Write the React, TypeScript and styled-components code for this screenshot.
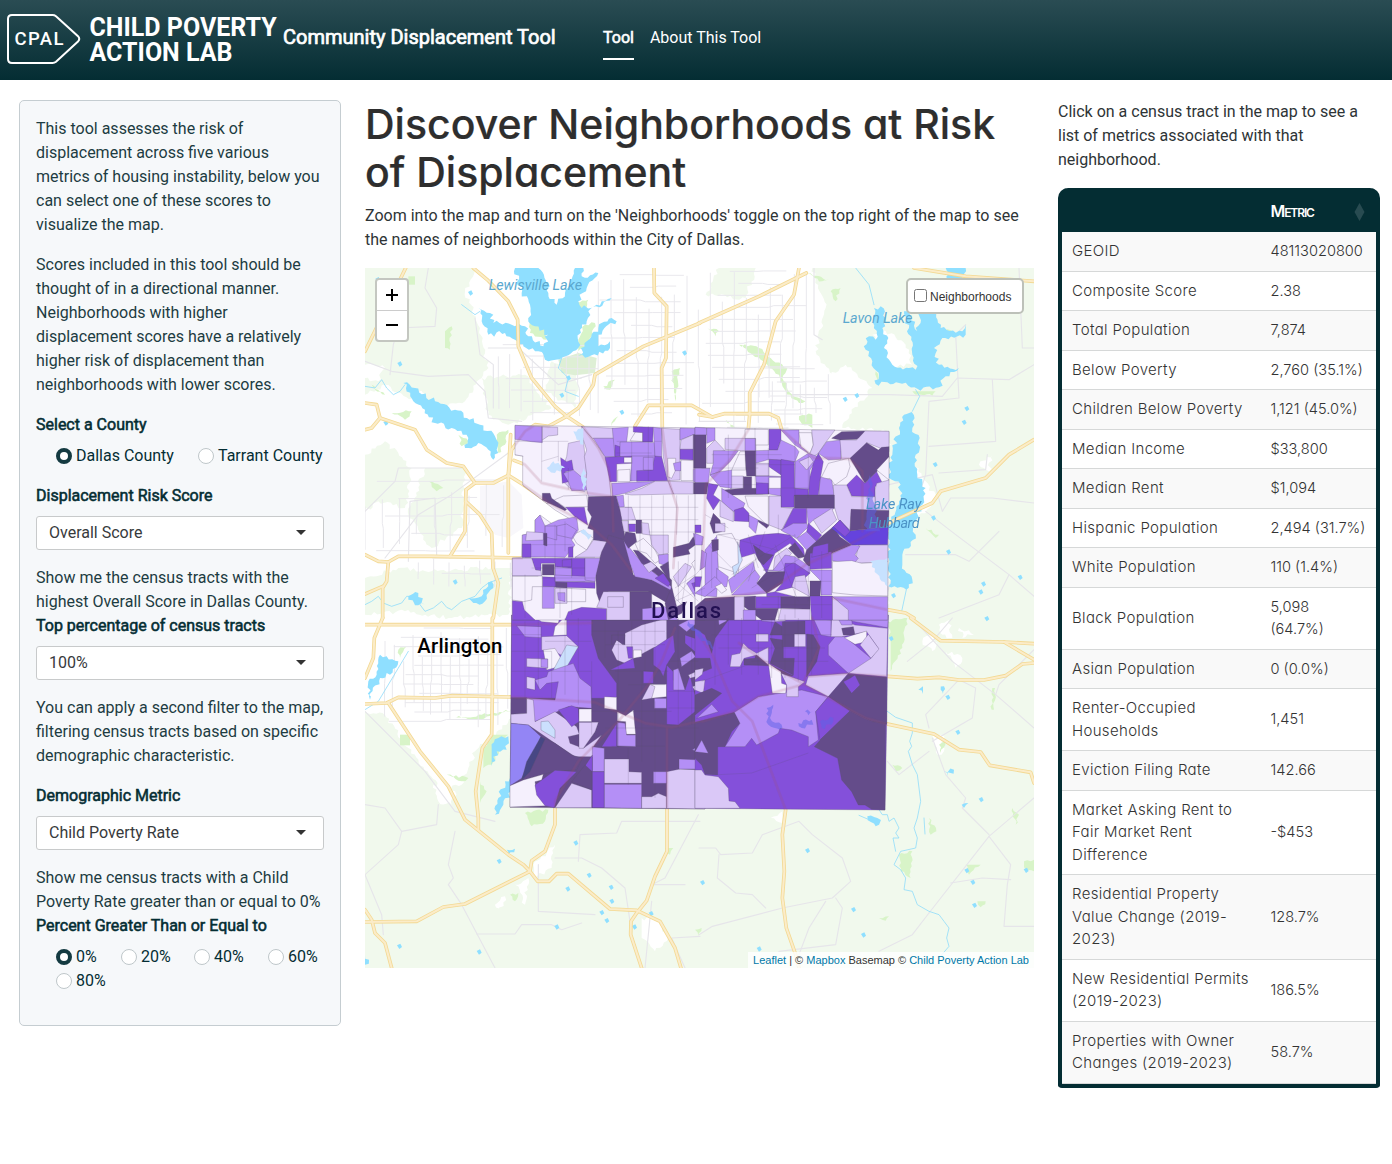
import React from "react";
import styled, { createGlobalStyle, css } from "styled-components";

const GlobalStyle = createGlobalStyle`
  *, *::before, *::after { box-sizing: border-box; }
  body { margin: 0; background: #fff; color: #042d33; font: 400 16px/24px Roboto, "Liberation Sans", sans-serif; }
  p, h1 { margin: 0; }
`;

const geometric = css`
  font-family: Inter, Lato, sans-serif;
  font-feature-settings: "cv11";
`;

/* ---------- header ---------- */
const Header = styled.header`
  height: 80px;
  padding: 0 6px;
  display: flex;
  align-items: center;
  background: linear-gradient(#2a4c53, #042d33);
  color: #fff;
`;
const Brand = styled.div`
  width: 277px;
  height: 80px;
  display: flex;
  align-items: center;
  svg { display: block; flex: none; }
`;
const Wordmark = styled.div`
  font-size: 25px;
  line-height: 25px;
  font-weight: 700;
  white-space: nowrap;
`;
const AppName = styled.div`
  width: 272px;
  padding-bottom: 6px;
  font-size: 20px;
  line-height: 30px;
  white-space: nowrap;
  -webkit-text-stroke: 0.7px #fff;
`;
const Nav = styled.nav`
  display: flex;
  gap: 16px;
  margin: 0 0 6px 48px;
`;
const NavLink = styled.a<{ $active?: boolean }>`
  height: 46px;
  line-height: 48px;
  border-bottom: 2px solid ${(p) => (p.$active ? "#fff" : "transparent")};
  -webkit-text-stroke: ${(p) => (p.$active ? "0.6px #fff" : "0")};
`;

/* ---------- page ---------- */
const Page = styled.main`
  display: grid;
  grid-template-columns: 322px 669px 322px;
  column-gap: 24px;
  align-items: start;
  padding: 20px 0 0 19px;
`;
const Sidebar = styled.aside`
  height: 926px;
  padding: 16px;
  border: 1px solid #c5cdd1;
  border-radius: 5px;
  background: #f6f8fa;
  white-space: nowrap;
`;
const Para = styled.p<{ $mb?: number; $color?: string }>`
  margin-bottom: ${(p) => p.$mb ?? 16}px;
  color: ${(p) => p.$color ?? "#1d3c42"};
`;
const Label = styled.div<{ $mb?: number }>`
  margin-bottom: ${(p) => p.$mb ?? 8}px;
  -webkit-text-stroke: 0.55px #042d33;
`;
const Radios = styled.div<{ $cols: string }>`
  display: grid;
  grid-template-columns: ${(p) => p.$cols};
  padding-left: 20px;
  margin-bottom: 16px;
`;
const Option = styled.label`
  display: flex;
  align-items: center;
  gap: 4px;
`;
const Dot = styled.span<{ $on?: boolean }>`
  width: 16px;
  height: 16px;
  flex: none;
  margin-top: -1px;
  border-radius: 50%;
  background: #fff;
  border: ${(p) => (p.$on ? "4.5px solid #143a41" : "1px solid #bfc7ca")};
`;
const Select = styled.div`
  height: 34px;
  padding: 0 17px 0 12px;
  margin-bottom: 16px;
  display: flex;
  align-items: center;
  justify-content: space-between;
  border: 1px solid #c8cacb;
  border-radius: 3px;
  background: #fff;
  color: #373a3c;
  &::after {
    content: "";
    border: 5px solid transparent;
    border-top-color: #333;
    border-bottom: 0;
    margin-top: -2px;
  }
`;
const Title = styled.h1`
  ${geometric}
  height: 96px;
  margin-bottom: 8px;
  font-size: 41px;
  line-height: 48px;
  font-weight: 500;
  white-space: nowrap;
  color: #2e2e2e;
  -webkit-text-stroke: 0.2px #2e2e2e;
`;

/* ---------- map chrome ---------- */
const MapFrame = styled.div`
  position: relative;
  width: 669px;
  height: 700px;
  overflow: hidden;
  background: #fff;
  font-family: "Liberation Sans", Arial, sans-serif;
  svg { display: block; }
`;
const ZoomBox = styled.div`
  position: absolute;
  left: 10px;
  top: 10px;
  width: 34px;
  height: 64px;
  border: 2px solid #c4c7c1;
  border-radius: 4px;
  background: #fff;
`;
const ZoomButton = styled.div`
  height: 30px;
  display: grid;
  place-items: center;
  & + & { border-top: 1px solid #ccc; padding-bottom: 2px; }
`;
const LayerBox = styled.div`
  position: absolute;
  right: 10px;
  top: 10px;
  width: 118px;
  height: 36px;
  padding: 1px 0 0 6px;
  display: flex;
  align-items: center;
  gap: 3px;
  border: 2px solid #bdc1b9;
  border-radius: 5px;
  background: #fff;
  color: #333;
  font-size: 12px;
  white-space: nowrap;
`;
const Check = styled.span`
  width: 13px;
  height: 13px;
  margin-top: -3px;
  border: 1px solid #767676;
  border-radius: 2.5px;
`;
const Credits = styled.div`
  position: absolute;
  right: 0;
  bottom: 0;
  height: 16px;
  padding: 0 5px;
  background: rgba(255, 255, 255, 0.8);
  color: #333;
  font-size: 11px;
  line-height: 16px;
  white-space: nowrap;
  a { color: #0078a8; }
`;

/* ---------- metric table ---------- */
const Table = styled.div`
  ${geometric}
  margin-top: 16px;
  border: 4px solid #042d33;
  border-top: 0;
  border-radius: 10px 10px 4px 4px;
  overflow: hidden;
  background: #042d33;
  font-size: 15px;
  line-height: 22.5px;
  font-weight: 300;
  color: #333;
`;
const HeadRow = styled.div`
  height: 44px;
  padding: 4px 11px 0 208.5px;
  display: flex;
  align-items: center;
  justify-content: space-between;
  color: #fff;
  font-weight: 600;
  font-size: 16px;
  letter-spacing: -1.1px;
  small { font-size: 12px; }
`;
const Row = styled.div<{ $odd: boolean }>`
  display: grid;
  grid-template-columns: 188.5px 100px;
  column-gap: 10px;
  align-items: center;
  padding: 8px 10px;
  border-bottom: 1px solid #d6d8d8;
  background: ${(p) => (p.$odd ? "#f9f9f9" : "#fff")};
  white-space: pre;
`;
const MetricName = styled.span`
  letter-spacing: 0.34px;
`;
const MetricValue = styled.span`
  font-size: 14.6px;
`;

/* ---------- cartography: units are thirds of a pixel ---------- */
type Shape = [string, string];

const rough = (pts: string, amp: number, seed = 7) => {
  let s = seed;
  const rnd = () => {
    s = (s * 16807 + 11) % 2147483647;
    return (s % 1000) / 500 - 1;
  };
  const p = pts.split(" ").map((q) => q.split(",").map(Number));
  const out: string[] = [];
  p.forEach(([x, y], i) => {
    const [a, b] = p[(i + 1) % p.length];
    const len = Math.hypot(a - x, b - y) || 1;
    const n = Math.max(1, Math.round(len / 9));
    const straight = x === a || y === b;
    for (let k = 0; k < n; k++) {
      const d = k && !straight ? rnd() * amp : 0;
      out.push(
        `${(x + ((a - x) * k) / n + (d * (b - y)) / len).toFixed(1)},${(y + ((b - y) * k) / n - (d * (a - x)) / len).toFixed(1)}`
      );
    }
  });
  return out.join(" ");
};

const TL = "translate(0 0)";
const TR = "translate(1002 0)";
const BL = "translate(0 1050)";
const BR = "translate(1002 1050)";

const greenLand: Shape[] = [
  [TL, "0,0 330,0 300,70 345,180 340,260 300,330 200,330 150,400 60,350 0,380"],
  [TL, "200,60 290,90 330,150 370,300 300,400 200,420 150,330"],
  [TL, "0,560 60,520 140,600 120,720 40,700 0,730"],
  [TL, "180,600 300,600 290,780 200,840 130,740"],
  [TL, "100,900 200,910 380,900 440,900 430,1040 260,1050 120,1030 0,1040 0,930"],
  [TL, "560,280 640,300 630,420 540,370"],
  [TL, "350,330 480,320 560,420 430,470 370,440"],
  [TR, "340,0 1005,0 1005,1050 565,1050 570,485 430,480 470,400 400,330 350,250 380,120"],
  [TR, "60,0 170,0 140,90 20,80"],
  [BL, "0,280 60,290 130,390 230,520 290,500 330,400 440,300 440,520 560,570 1005,570 1005,1050 0,1050"],
  [BR, "0,570 560,570 560,0 1005,0 1005,1050 0,1050"],
];
const whiteTowns: Shape[] = [
  [TL, "0,290 60,300 40,340 0,330"],
  [TR, "520,200 560,190 620,230 640,290 570,300"],
  [TR, "640,580 680,640 710,690 690,720 650,760 640,700"],
  [TR, "840,590 880,560 870,610"],
  [TR, "360,340 440,290 520,360 450,440 380,470"],
  [BL, "205,500 270,520 260,560 220,550"],
  [BL, "830,900 880,905 910,960 870,1000 830,960"],
  [BL, "505,740 570,680 560,750 510,780"],
  [BL, "390,860 420,835 405,880"],
  [BL, "450,800 490,780 480,860"],
  [BR, "670,70 690,50 715,75 700,100"],
  [BR, "720,20 750,5 760,60 730,50"],
  [BR, "780,30 825,50 790,60"],
  [BR, "740,100 790,120 770,150"],
  [BR, "700,355 730,350 735,400 715,410"],
  [BR, "215,600 250,580 250,615"],
];
const parks: Shape[] = [
  [TL, "490,150 550,175 545,215 495,195"],
  [TL, "640,215 660,170 690,165 670,230 640,250"],
  [TL, "610,110 670,95 660,125 620,125"],
  [TL, "395,500 430,485 420,530 400,555"],
  [TL, "240,190 260,175 255,245 240,240"],
  [TL, "80,435 140,430 120,455"],
  [TL, "715,355 750,335 735,365"],
  [TL, "920,310 945,300 930,400"],
  [TL, "280,500 310,520 290,535"],
  [TL, "20,350 60,380 30,365"],
  [TL, "190,640 235,660 215,670"],
  [TL, "745,455 760,445 740,475"],
  [TL, "130,25 150,25 150,50 130,50"],
  [TR, "120,230 180,240 215,270 265,300 250,330 280,380 320,400 300,405 260,370 240,320 205,290"],
  [TR, "300,445 340,440 340,480 310,470"],
  [TR, "325,15 390,35 370,40"],
  [TR, "25,180 60,190 50,205"],
  [TR, "395,70 425,60 410,100"],
  [TR, "625,580 650,555 640,585"],
  [TR, "640,370 710,370 700,383 650,380"],
  [TR, "730,180 760,190 750,205"],
  [TR, "530,310 545,340 535,345"],
  [TR, "80,455 110,480 95,478"],
  [TR, "680,780 720,800 710,810"],
  [BL, "355,400 385,350 430,350 380,440 355,450"],
  [BL, "105,350 135,350 135,382 105,382"],
  [BL, "245,470 310,480 290,490"],
  [BL, "345,490 365,520 345,555"],
  [BL, "480,585 550,575 540,610 500,625"],
  [BL, "265,300 350,290 440,275 350,305"],
  [BL, "900,690 925,690 915,710"],
  [BL, "100,95 125,85 105,120"],
  [BL, "435,830 460,825 450,850"],
  [BL, "990,935 1010,930 1000,955"],
  [BR, "565,10 625,0 610,90 575,160 575,70"],
  [BR, "600,710 640,700 635,780 605,760"],
  [BR, "720,380 738,370 725,405"],
  [BR, "540,900 570,895 560,908"],
  [BR, "835,850 860,850 845,868"],
  [BR, "975,730 1005,725 1005,760 980,755"],
  [BR, "580,440 610,450 590,460"],
  [BR, "940,570 960,590 950,620"],
  [BR, "690,600 712,640 695,650"],
  [BR, "800,740 845,740 810,770"],
  [BR, "880,210 888,210 885,275 878,275"],
];
const lakes: Shape[] = [
  [TL, "450,0 520,0 545,45 550,75 575,110 600,75 615,40 630,0 655,0 650,25 700,15 665,60 640,100 650,120 720,100 740,90 670,130 665,160 645,185 640,240 610,262 540,275 520,250 475,235 465,200 490,205 535,235 550,200 510,175 490,150 495,110 470,75"],
  [TL, "340,120 375,135 385,165 440,170 480,175 500,235 450,215 420,195 370,200 350,160"],
  [TL, "640,265 665,220 700,180 740,150 755,160 700,200 700,235 735,220 735,240 680,262"],
  [TL, "115,345 150,360 210,400 270,425 345,470 390,505 395,545 385,575 370,545 340,525 300,540 310,510 260,480 210,465 180,425 145,400"],
  [TL, "130,985 160,975 180,1010 150,1012"],
  [TL, "310,990 350,985 380,940 385,960 360,1000 325,1005"],
  [TR, "525,120 545,115 560,150 550,180 568,210 555,240 580,290 630,300 650,305 640,260 630,180 615,130 625,130 655,190 665,130 710,130 725,180 790,190 800,170 800,200 730,210 705,240 720,290 780,300 740,325 720,358 655,362 600,345 530,348 540,325 520,280 500,245 510,205 530,215"],
  [TR, "740,0 800,0 790,35 745,35"],
  [TR, "615,440 638,432 640,480 662,510 650,560 655,620 680,660 670,710 645,760 650,800 610,860 610,890 640,935 622,965 568,955 567,780 600,700 605,650 570,630 580,560 600,480"],
  [BL, "45,110 65,115 100,130 75,170 45,180 15,245 10,190 35,170"],
  [BL, "380,390 400,360 430,355 425,395 395,400 380,445"],
  [BL, "435,480 440,520 415,560 390,590 400,540 420,490"],
  [BL, "425,695 450,692 430,708"],
  [BL, "0,1010 12,1025 0,1040"],
  [BR, "505,595 535,600 548,628 530,625"],
  [BR, "658,215 672,205 672,228"],
  [BR, "735,460 765,455 745,475"],
  [BR, "725,215 735,205 732,228"],
  [BR, "788,560 808,555 795,570"],
];
const ponds = [
  "38,35 316,75 104,288 62,465 590,382 610,330 1440,394 1475,383 1805,422 1797,463 1710,590 1705,750 1750,852 1965,928 1855,948 1847,972 1585,983 958,255 770,433 270,942 1578,1112 1865,1052 1748,1288",
  "402,1780 632,1725 672,1822 738,1858 740,1900 710,1934 725,1958 608,1863 575,1977 858,1937 808,1977 103,2035 342,2052 1327,1748 1012,1844 1465,1925 1495,2001 1182,2043 1828,1912 1823,1843 1805,1808 1983,1807 1778,1393 1848,1595",
]
  .join(" ")
  .split(" ")
  .map((q) => q.split(",").map(Number));

const streams: Shape[] = [
  [TL, "0,355 30,360 50,335 65,360 85,380 105,370 120,350"],
  [TL, "0,1010 20,1000 40,985 55,1005 80,1015 110,1005 125,985 150,985 165,1010 180,1030 205,1020 230,1000 245,1018 260,1025 290,1000 330,985 350,960 370,945 410,930"],
  [TL, "290,110 330,140 345,130"],
  [TL, "590,270 580,300 610,330 600,370 640,385"],
  [TR, "470,0 510,50 525,110"],
  [TR, "650,365 662,385 640,430"],
  [TR, "622,965 608,1030"],
  [BR, "565,280 590,298 640,315 640,345 632,370 638,385 628,400 640,440 655,470 660,510 665,550 655,600 645,630 655,660 650,690 605,700 585,740 605,755 620,780 615,815 640,820 655,860 690,880 720,890 735,910 750,930 743,960 750,985 720,1020"],
  [BR, "540,575 550,590 565,590 570,610 585,600 600,630 590,645 600,660 582,660 590,700"],
  [BR, "675,600 678,648"],
  [BR, "480,592 510,605"],
  [BL, "0,275 40,250 130,100"],
];
const highways: Shape[] = [
  [TL, "325,0 370,38 430,100 458,155 460,235 500,330 570,415 605,445 655,478 700,540 730,600 742,685 745,790"],
  [TL, "1005,165 835,235 690,320 685,350 640,420 605,445 550,475 510,470 480,490 440,545 430,622"],
  [TL, "867,0 868,75 905,115 903,270 890,300 892,480 912,640 937,720 925,900"],
  [TL, "810,475 850,412 980,412 1042,447"],
  [TL, "0,405 35,410 45,450 150,485 185,545 245,585 295,595 330,645 385,645 430,622 475,650 560,710 670,770 740,830 800,910"],
  [TL, "0,485 20,480 45,450"],
  [TL, "330,645 303,665 302,700 345,740 380,795 384,900 400,945 385,1050"],
  [TL, "302,700 300,790 255,865"],
  [TL, "0,860 40,880 70,882 100,865 200,865 470,870"],
  [TL, "70,882 65,940 53,960 53,1050"],
  [TL, "0,978 53,955"],
  [TL, "437,500 430,622 430,855"],
  [TL, "447,577 480,590 530,645 665,675 740,685"],
  [TL, "122,0 0,250"],
  [TR, "300,0 285,80 230,160 195,290 152,375 152,440 148,485 90,580 20,650 10,900"],
  [TR, "322,15 180,85 0,165"],
  [TR, "0,440 40,447 75,437 210,437 238,450 248,485 345,570 450,572 490,610 490,790"],
  [TR, "645,0 800,25 1005,40"],
  [TR, "1005,515 930,560 860,630 725,670 700,705 590,755 460,825 320,890 210,970 20,995"],
  [TR, "400,990 565,1025 620,1035 645,1050"],
  [BL, "0,20 440,20 680,15"],
  [BL, "53,0 28,60 25,120 0,180"],
  [BL, "382,0 382,235 380,350 352,390 332,520 340,600 340,635"],
  [BL, "0,258 65,255 100,238 210,240 262,233 440,237 690,253 840,315 920,328 1010,308"],
  [BL, "70,255 165,400 250,505 300,605 430,710 475,740 495,760 518,790 552,790 575,767 610,767 735,873 815,877 885,910 930,990 948,1050"],
  [BL, "495,760 300,858 235,867 155,910 0,912"],
  [BL, "495,760 500,728 540,700 570,620 570,550 640,430 760,310 850,200 890,130 930,30"],
  [BL, "906,330 906,700 870,775 845,848 815,885 798,910 797,950 830,1050"],
  [BL, "0,875 20,905 30,945 60,975 80,1050"],
  [BR, "0,50 40,110 100,250 160,310 260,575 250,650 256,760 250,840 262,930 290,1010 300,1050"],
  [BR, "635,0 725,68 915,72 1005,125"],
  [BR, "915,72 1005,77"],
  [BR, "330,175 440,167 565,175 655,182 720,178 780,186 855,186 920,173 970,138 1005,135"],
  [BR, "120,75 210,140 380,235 500,300 560,317 705,348 780,395 845,402 872,442 995,463 1005,495"],
  [BR, "10,310 105,280 180,235 310,200 360,90 340,0"],
];
const lanes: Shape[] = [
  [TL, "75,320 85,230 100,180 210,175 215,120 180,60 190,0"],
  [TL, "0,280 80,310 190,325 310,320 360,370 370,450 470,460"],
  [TL, "330,150 345,260 385,290 385,420"],
  [TL, "370,240 460,240 580,350 680,320"],
  [TL, "450,540 260,680 160,740 60,870"],
  [TL, "0,730 90,640 100,600 290,600"],
  [TL, "130,880 135,700 210,690 215,860"],
  [TR, "540,1050 680,620 690,400 780,390 770,200 800,170"],
  [TR, "280,380 570,380 730,385 775,330 930,335 1005,290"],
  [TR, "570,650 700,620 730,730 755,690 880,690 1005,705"],
  [TR, "960,0 970,240 1005,240"],
  [TR, "880,335 890,520 690,535"],
  [TR, "720,615 860,605 865,560"],
  [TR, "680,730 770,800 930,920 1005,985"],
  [TR, "620,860 770,860 810,880 900,790"],
  [TR, "930,920 900,980 720,1050"],
  [TR, "0,460 140,460"],
  [TR, "345,0 345,200 370,215"],
  [BL, "0,560 60,570 110,640 215,620 220,560"],
  [BL, "110,640 100,680 0,770"],
  [BL, "0,770 50,890 55,950"],
  [BL, "270,640 250,740 265,780 250,800 290,860 390,1050"],
  [BL, "335,948 450,948 470,920 560,920 590,935 650,915"],
  [BL, "0,280 180,460 270,580 390,610"],
  [BL, "640,730 645,650 755,645 770,610 1005,610"],
  [BL, "570,720 650,720 710,750 780,810 795,910"],
  [BL, "860,850 840,1050"],
  [BL, "1000,590 900,780 860,800 960,800"],
  [BL, "520,740 520,880 690,890"],
  [BL, "960,1050 920,960 1005,955"],
  [BR, "0,690 50,690 65,710 160,705 190,650 300,610 340,650 430,720 455,790 400,840 250,870 40,925 0,950"],
  [BR, "60,710 55,780 110,825 160,830 200,870"],
  [BR, "410,840 430,870 410,980 240,1000"],
  [BR, "380,850 330,930 300,1010"],
  [BR, "690,885 870,655 1005,540"],
  [BR, "870,650 790,570 800,540 740,470 700,360"],
  [BR, "870,655 935,740 925,800 915,925 1005,925"],
  [BR, "755,795 850,780 935,785"],
  [BR, "540,1000 640,950 690,885"],
  [BR, "690,330 680,290 780,185 830,210 820,300 700,370"],
  [BR, "640,0 760,130 890,230 1005,330"],
  [BR, "890,230 900,200 1005,95"],
  [BR, "565,430 600,470 690,400"],
  [BR, "625,130 700,70 760,0"],
];

/* street grids: x0, y0, x1, y1, step */
const grids = [
  [400, 230, 700, 460, 34],
  [700, 20, 1000, 470, 38],
  [1000, 10, 1350, 480, 36],
  [0, 640, 420, 860, 52],
  [60, 1080, 430, 1380, 28],
  [160, 870, 440, 960, 46],
  [1180, 300, 1420, 480, 42],
  [480, 1200, 1000, 1600, 37],
];
const gridPath = (() => {
  let s = 91;
  const rnd = () => ((s = (s * 16807) % 2147483647) % 1000) / 1000;
  let d = "";
  grids.forEach(([x0, y0, x1, y1, step]) => {
    for (let x = x0; x <= x1; x += step) {
      const a = y0 + rnd() * (y1 - y0) * 0.35;
      const b = y1 - rnd() * (y1 - y0) * 0.3;
      d += `M${x} ${a}V${(a + b) / 2}l${rnd() * 12 - 6} 14V${b}`;
    }
    for (let y = y0; y <= y1; y += step) {
      const a = x0 + rnd() * (x1 - x0) * 0.35;
      const b = x1 - rnd() * (x1 - x0) * 0.3;
      d += `M${a} ${y}H${(a + b) / 2}l16 ${rnd() * 12 - 6}H${b}`;
    }
  });
  return d;
})();

/* ---------- tracts, by risk band ---------- */
const band: Record<string, string> = { W: "#f5f0fd", L: "#dac8f7", M: "#b48ff6", D: "#8450da", K: "#644c8a", B: "#9385f5", S: "#cbdffd", N: "#474784", V: "#6543dd" };
const parse = (s: string): Shape[] =>
  s.trim().split("\n").map((l) => { const t = l.trim(); return [t[0], t.slice(2)] as Shape; });

const northWest = parse(`W 30,16 600,24 600,600 22,600 22,414 50,412 52,345 90,338 90,300 105,285 150,318 200,300 150,270 53,195 53,108 30,105
M 30,16 112,20 112,68 80,65 30,58
L 112,20 158,22 158,45 130,48 112,60
L 190,70 235,60 240,110 245,160 240,215 195,205 175,185 170,150 185,110
L 230,18 265,60 300,110 312,150 318,230 250,228 242,200 245,160 238,110 245,90 232,50
D 167,113 185,125 200,120 205,150 180,155 190,185 172,190
M 175,160 205,150 240,180 245,210 200,212 190,185
L 230,20 325,25 325,55 262,55
M 265,55 330,55 330,110 300,110
M 322,25 370,22 365,65 345,110 330,110
D 330,75 345,80 348,108 330,110
W 400,22 413,22 413,65 375,62
D 385,20 445,22 443,66 413,66 413,38 385,36
M 345,66 413,66 450,68 450,110 345,110
M 445,22 470,25 470,110 450,110
D 300,112 380,108 380,130 335,132 335,185 315,185
M 380,130 380,108 450,108 460,150 440,180 375,183
D 450,108 470,110 488,182 395,184 395,152 440,150
M 415,112 445,112 445,150 415,150
W 338,150 375,148 375,185 338,185
W 357,112 380,112 380,128 357,128
L 470,25 525,28 525,180 488,182 475,110
W 488,115 512,115 512,150 500,175 488,170
M 505,130 528,125 528,152 510,152
M 525,24 600,26 600,42 565,44 525,60
L 528,60 565,44 565,88 525,88
D 525,88 565,88 565,120 525,118
K 565,44 600,44 600,145 565,145
W 528,120 565,122 565,182 528,182
M 565,148 600,148 600,185 565,185
K 565,188 600,188 600,222 565,222
L 488,184 565,186 565,222 505,222
M 320,190 450,184 410,200 360,220 322,228
L 450,184 490,184 505,222 380,225 360,222 410,205
M 333,228 355,226 358,260 343,262
L 340,262 380,262 392,300 350,300
W 125,250 175,228 245,225 250,260 180,262 160,248
K 250,230 333,228 345,270 360,350 360,368 330,370 300,365 265,360 265,330 248,325 260,290 248,270
D 182,262 238,262 248,315 210,290
K 112,220 135,220 140,235 185,268 180,272 112,240
W 200,345 235,330 265,355 245,390 215,370
L 265,360 305,365 285,412 210,412 245,390
K 310,345 360,360 385,465 440,480 500,505 510,560 480,545 430,515 310,515 300,540 285,550 275,520 272,460 290,395 305,365
M 355,358 375,385 400,415 450,460 500,500 500,512 440,480 390,470 375,430
K 362,335 390,340 395,365 370,385 355,360
K 385,390 400,392 455,440 500,480 500,500 450,460 410,430
L 415,435 438,425 455,440 432,458
W 390,370 415,355 450,390 465,420 450,430 425,400 400,392
D 370,312 392,312 392,335 372,335
K 393,300 410,300 410,340 393,340
L 410,308 430,310 435,345 412,342
L 435,345 490,345 490,400 462,405 440,375
M 460,405 490,402 490,440 462,430
L 350,302 370,302 370,335 357,335
K 505,382 552,370 565,350 575,372 550,390 555,402 505,412
M 565,340 590,350 590,372 570,372
D 450,475 475,460 495,490 490,500
K 465,440 490,425 495,485 478,460
M 52,345 90,338 90,300 105,285 120,318 160,300 215,290 220,330 200,360 210,375 180,412 120,410 52,412
M 155,318 185,312 215,330 200,355 155,345
M 120,318 155,318 155,360 120,350
L 65,335 115,338 115,360 62,362
K 116,340 126,340 126,378 116,375
D 52,372 78,372 78,412 52,412
D 190,382 204,380 204,412 190,412
D 80,415 240,415 240,470 200,470 200,445 150,440 150,430 108,430 108,452 90,450
M 150,440 200,445 200,470 240,470 240,485 150,478
L 22,415 80,415 92,450 108,452 110,468 22,468
K 112,433 148,433 148,465 112,465
M 148,465 270,470 270,485 150,485
D 112,470 150,472 150,485 270,487 270,505 112,500
K 152,486 186,488 186,504 152,502
M 240,415 285,415 272,470 270,485 240,480
M 112,500 148,500 148,565 112,565
D 172,420 200,418 200,440 172,440
W 22,468 112,468 112,500 82,500 80,540 55,545 22,540
L 150,505 186,505 186,550 150,550
M 158,518 180,518 180,545 160,540
W 186,505 242,508 242,545 186,545
D 22,542 52,545 58,570 90,600 22,600
D 190,575 230,562 305,566 305,600 180,600
L 295,515 375,515 375,600 305,600 305,566 275,562
L 308,530 355,530 355,562 308,562
K 375,515 440,515 440,600 375,600
M 412,566 480,560 520,600 412,600
L 505,470 540,430 560,440 520,500
M 545,490 575,465 600,500 570,530
D 560,490 580,485 590,505 570,515
W 560,430 600,390 600,450 575,460
K 500,500 515,560 545,545 530,580 490,600 480,550`);

const northEast = parse(`W 0,22 582,34 578,600 0,600
M 0,22 35,24 35,45 0,45
K 0,45 33,45 33,145 0,145
M 35,24 60,24 60,60 35,70
L 35,85 60,60 90,92 55,100 55,130 35,130
M 55,92 130,92 105,125 75,155 45,165 55,130
L 90,55 182,55 182,92 140,92 90,88
M 150,55 182,55 182,92 150,92
W 150,28 220,28 220,75 182,75 182,55 150,55
D 222,28 258,28 258,60 248,90 222,90
M 182,92 248,90 258,60 300,80 312,95 300,125 222,118 182,130
L 182,130 222,130 222,168 182,168
D 222,118 258,120 258,165 222,140
M 258,30 312,30 312,70 340,100 300,75
W 312,38 350,38 355,75 345,100 318,80
L 350,30 420,30 390,70 370,100 355,110 345,100 355,75
M 395,65 438,60 438,118 400,120 370,100
M 300,125 340,100 370,110 345,150 345,208 298,205
L 312,125 345,110 355,125 335,150
K 410,55 440,35 510,33 500,50 485,58 435,60
L 435,60 485,60 510,33 582,34 582,95 515,68 490,100 470,115 440,118
K 465,115 515,68 550,90 560,82 582,80 582,115 545,155 510,190
W 545,150 582,110 582,180
W 375,180 400,130 460,115 465,140 455,170 420,195 405,175
M 375,170 410,180 418,225 372,225
D 455,195 485,165 510,190 545,155 560,185 540,200 540,230 470,228
L 545,190 582,180 582,272 542,270 540,210
L 415,195 455,195 470,230 540,230 542,272 470,268 465,330 430,300 418,260
M 0,145 45,145 40,188 0,188
L 105,168 145,168 145,205 105,205
M 45,165 75,155 110,150 110,205 75,200
K 150,93 182,93 182,168 155,168 150,120
W 110,150 135,95 150,95 152,150
M 182,168 222,168 258,170 258,228 222,222 183,188
K 0,188 40,188 35,222 0,222
K 85,210 145,205 145,170 170,170 170,205 220,205 222,222 110,225
D 183,188 220,190 220,222 183,222
W 222,172 258,172 258,205 222,205
D 258,118 298,125 298,205 340,208 340,228 298,228 298,262 258,262
D 370,100 385,125 375,180 370,228 340,228 345,170 355,130
K 298,225 418,225 418,265 298,265
D 40,190 70,195 55,225 75,240 55,270 35,235
M 80,205 150,250 145,262 115,275 80,245
L 75,240 115,275 115,305 75,290
D 118,270 145,262 162,280 162,305 118,303
M 162,285 190,300 182,340 162,320
W 150,228 220,228 220,320 160,260
L 222,228 258,228 258,262 295,265 260,330 222,315
K 190,300 222,315 215,325 190,305
D 262,330 295,265 335,265 335,310 295,320
M 258,330 295,310 335,310 340,320 305,355 265,335
M 335,265 418,265 355,300 340,315
L 355,300 410,265 425,300 380,340
D 340,310 380,345 365,365 335,335
M 305,355 335,335 365,365 335,390
K 335,390 385,345 415,320 435,350 470,375 410,400 340,440 325,420
V 410,325 435,300 465,332 580,320 578,374 470,375
K 468,268 582,272 580,320 465,332
D 415,320 435,300 465,335 450,350
L 490,375 578,375 578,425 480,430
M 412,400 470,375 495,378 480,405 490,415 475,432 412,422
W 412,425 470,422 500,430 578,425 578,528 480,525 412,518
M 412,530 578,530 578,600 460,600 430,545
L 412,530 460,570 460,600 412,600
D 185,345 250,340 285,345 325,385 330,410 285,370 240,400 215,460 180,400 130,415 135,360
K 175,375 210,400 235,405 205,435 190,420
K 280,385 300,368 330,410 310,415
L 240,410 275,385 290,400 250,445 235,450
M 205,450 235,450 270,405 300,410 345,440 345,460 300,445 265,455
D 270,430 300,430 345,460 300,500 240,515 262,490
D 345,400 410,395 410,445 345,448
M 345,450 410,450 410,525 378,525 375,480
K 345,483 378,483 375,528 345,528
L 300,470 330,465 345,530 290,500
K 185,490 215,455 270,455 262,490 215,520
D 355,380 400,370 400,400 350,412
M 110,525 180,450 195,470 185,490 215,520 160,525
M 100,480 175,425 180,450 110,520
D 215,520 240,515 300,530 215,530
K 30,535 120,530 120,600 0,600 0,560
L 118,530 148,530 148,570 182,572 182,600 118,600
K 148,530 182,528 182,565 250,565 240,600 200,600 148,560
M 145,570 182,570 182,600 145,600
D 182,530 258,530 258,565 182,565
K 258,530 345,530 345,568 258,565
L 258,566 345,568 345,600 250,600
D 345,528 412,528 412,600 350,600
M 30,390 68,345 70,440 65,530 30,528
M 65,445 100,470 95,500 65,500
W 65,345 110,340 135,385 130,460 70,440
S 128,365 142,420 118,470 112,440 130,430
K 55,280 75,300 80,335 55,340 45,310
L 60,310 90,310 90,335 60,335
M 0,340 25,350 22,375 0,375
D 0,315 18,315 18,338 0,338
D 0,470 20,470 15,500 0,500
M 0,520 60,470 80,490 30,530
W 60,500 80,490 95,510 80,520
M 20,390 35,400 30,440 15,450
K 50,360 70,358 70,390 52,395`);

const southWest = parse(`K 20,0 600,0 600,582 15,577
D 20,0 260,5 260,60 280,130 335,205 335,250 18,250
W 75,0 165,0 160,25 110,20
W 150,35 185,0 185,60 145,62
M 35,32 108,35 108,68 60,65
L 110,65 185,62 220,95 195,135 150,110 110,105
W 115,105 150,100 180,150 125,165
S 185,90 220,95 180,165 145,165
L 65,130 128,132 128,160 65,155
M 108,132 128,132 128,158 108,156
L 65,185 90,190 90,225 65,220
M 90,195 125,185 130,170 205,145 225,190 258,215 260,280 190,275 90,320 68,250 150,255 160,200 125,205 105,225
K 18,248 65,248 65,295 18,298
L 65,250 85,255 90,320 150,290 215,335 222,355 260,322 280,322 270,350 235,400 290,360 265,395 265,425 210,425 150,385 70,330 18,325 18,298 65,295
B 18,325 70,330 108,365 50,490 15,512
S 108,320 130,318 150,345 150,370 108,345
K 108,365 150,385 200,420 232,430 215,465 150,468 55,495
N 108,365 120,372 75,470 50,495 65,440
D 160,285 200,272 220,280 222,320 200,335
K 190,365 222,358 222,395 195,385
L 222,322 280,322 270,350 235,400 222,400
W 222,282 260,282 260,320 222,320
W 298,245 335,247 335,285 298,280
W 337,290 362,302 385,285 392,358 362,358 362,320 337,318
D 290,395 335,325 335,395
M 337,322 360,325 365,360 392,360 392,395 337,393
M 262,395 298,400 298,470 262,470
D 232,465 262,420 262,470
W 15,512 55,495 115,478 110,495 90,500 95,530 130,572 15,576
D 90,510 150,466 215,470 165,520 148,578 120,572 95,540
L 150,578 200,505 260,525 260,578
K 200,500 240,450 262,470 262,525
D 262,470 298,470 298,578 262,578
L 298,432 372,432 372,470 410,472 410,505 298,505
M 298,508 410,508 410,580 298,578
L 410,545 440,545 460,535 485,545 485,580 410,580
L 485,470 525,462 600,465 600,582 485,580
M 445,470 485,470 485,505 445,505
M 522,432 590,435 590,462 522,462
M 562,405 600,375 600,415
L 320,105 335,75 360,90 360,55 410,30 485,10 485,95 445,98 360,145 335,135
W 385,105 410,105 410,125 385,130
D 365,95 383,95 383,130 370,130
K 320,60 360,60 355,90 335,75 320,90
D 315,165 385,130 390,160
D 445,100 505,60 510,110 485,150 475,185 465,165 445,150
W 435,208 485,208 485,245 440,250
L 410,255 435,208 450,215 440,250
M 448,250 485,250 485,280 448,280
D 415,168 445,170 445,205 415,205
D 485,150 505,170 505,195 540,225 555,180 570,240 570,290 520,330 485,328
M 505,165 520,160 540,225 505,225
M 525,130 560,108 572,125 530,155
D 540,60 600,80 600,150 570,110 540,85
L 550,180 595,160 590,180 555,190
L 562,215 600,200 600,235 575,235
M 520,30 560,10 580,20 545,50
L 410,0 445,0 445,12 410,12
D 260,5 310,5 310,12 260,14`);

const southEast = parse(`D 0,0 580,0 575,328 570,585 0,580
M 380,0 580,0 578,38 480,20 440,12
K 20,0 80,0 100,15 60,70 50,115 30,60 0,40 0,10
M 70,10 95,0 95,18 72,30
K 0,130 45,130 50,160 0,180
L 0,165 25,160 22,178 0,195
L 0,200 30,195 25,235 0,225
K 0,240 50,220 80,235 50,260 0,300
M 5,310 50,268 70,290
K 0,322 118,292 135,325 110,350 90,395 68,395 68,480 30,478 20,450 0,430
M 0,410 20,375 40,415
L 0,465 20,465 30,480 70,485 100,520 102,558 120,560 135,580 0,580
M 118,292 190,245 320,225 400,245 362,290 370,375 340,395 340,365 290,345 255,340 250,355 185,390 170,370 150,395 90,395 135,325
K 147,132 180,130 182,115 222,148 295,182 262,182 220,152 147,150
K 225,70 265,75 265,130 298,130 295,180 225,145 240,100
K 240,20 262,35 262,60 225,60
K 262,20 330,18 330,57 298,57 298,95 262,95
L 298,57 332,57 332,95 298,95
K 335,57 355,60 375,95 365,140 335,185
L 183,57 220,57 220,80 183,80
M 200,0 240,0 240,22 200,18
L 240,0 290,0 270,18 240,20
L 145,85 160,100 185,115 220,97 220,150 185,120 147,130 135,155 105,155 110,120 135,115
W 220,145 258,170 260,205 275,210 272,235 232,235
L 258,175 330,200 310,215 310,245 275,245 275,210
L 340,183 460,175 400,245 332,210
M 355,10 408,15 408,65 378,60
M 400,90 420,65 450,65 528,130 500,160 460,175 400,120
L 410,10 435,10 480,30 578,40 575,185 460,175 528,130 550,100 515,50 440,65 408,65
K 440,40 475,35 480,60 445,60
M 430,12 470,15 472,30 440,30
W 448,68 515,48 515,80 480,88
L 495,90 520,58 552,102 528,130
K 400,245 460,177 575,187 575,328 530,320 465,288
D 445,200 465,190 480,180 495,210 470,235
D 362,290 400,245 465,288 375,375
K 465,288 530,320 572,325 570,585 530,583 510,570 490,570 470,530 440,495 428,430 358,395 380,370`);

const districts: [string, Shape[]][] = [
  ["translate(420 1041)", southWest],
  ["translate(990 1041)", southEast],
  ["translate(420 456)", northWest],
  ["translate(990 456)", northEast],
];

/* tract boundaries that divide areas of one band */
const seams =
  "M790 682V800M825 682V850M860 682V870M895 682V860M935 682V800M970 682V880M780 718H1000M800 755H1000M850 792H990M755 520H890M755 555H860M850 475V640M800 520V640M530 475V640M580 520V580M448 520H610M450 560L475 565M530 580L580 565M610 600V665M540 770V870M570 770V870M600 760V850M500 830H620M480 868H690M500 900H660M570 870V960M620 870V930M530 930H690M480 920V1050M443 925H520M585 960V1050M620 960V1040M1090 500V690M1170 480V680M1210 540V680M1040 560H1250M1010 600H1180M1170 590H1290M1170 625H1250M1040 650H1180M1290 520V680M1250 660H1330M1330 560V690M1020 740L1090 780M1240 740V800M1060 800L1250 850M1150 800L1180 900M1200 790L1150 940M1100 920L1290 800M1160 960L1340 850M1230 830L1300 1000M1290 800V1050M1240 985V1050M1330 880V1000M1370 850V1050M1290 940H1400M1190 1010H1400M680 1090H900M720 1060V1170M760 1090V1300M800 1060V1140M840 1060V1210M870 1060V1240M720 1130H900M750 1210H910M790 1250H900M680 1330H920M720 1380H1000M760 1300V1440M830 1210V1480M870 1300V1590M740 1435H900M790 1440V1550M680 1180V1400M940 1050V1380M980 1080V1370M910 1180H1000M910 1270H990M910 1320H1010M440 1100H530M440 1150H560M480 1060V1290M520 1060V1260M440 1210H680M560 1150V1290M600 1050V1280M640 1050V1310M540 1120H680M1050 1060V1250M1090 1050V1190M1130 1050V1220M1180 1060V1220M1220 1050V1230M1260 1040V1230M1300 1050V1240M1340 1040V1220M1040 1100H1400M1060 1140H1380M1160 1180H1390M1010 1240L1150 1190M1060 1520L1160 1515L1330 1455M910 1010L1010 900M930 1000L1020 960M920 930L1000 1000M930 960L990 920M900 960L960 1020M940 880V1000M970 880L950 1010M1010 820V1000M1040 850V960M1030 830L1100 900";

const Ribbon = ({ list, stroke, width }: { list: Shape[]; stroke: string; width: number }) => (
  <g fill="none" stroke={stroke} strokeWidth={width} strokeLinejoin="round" strokeLinecap="round">
    {list.map(([t, p], i) => <polyline key={i} transform={t} points={p} />)}
  </g>
);
const Areas = ({ list, fill, amp }: { list: Shape[]; fill: string; amp: number }) => (
  <g fill={fill}>
    {list.map(([t, p], i) => <polygon key={i} transform={t} points={rough(p, amp, i * 131 + 17)} />)}
  </g>
);

const BaseMap = () => (
  <svg width="669" height="700" viewBox="0 0 2007 2100" role="img" aria-label="Map of Dallas County census tracts">
    <Areas list={greenLand} fill="#f1f9ed" amp={7} />
    <Areas list={whiteTowns} fill="#fff" amp={7} />
    <polygon fill="#f8f7fb" points="345,655 430,640 470,680 475,780 430,810 390,800 345,730" />
    <polygon fill="#deefd5" points="580,275 640,255 695,270 690,315 630,322 590,315" />
    <Areas list={parks} fill="#d8f4c8" amp={5} />
    <path d={gridPath} fill="none" stroke="#e9e8ed" strokeWidth="3" />
    <Ribbon list={lanes} stroke="#e6e5ea" width={3.4} />
    <Ribbon list={streams} stroke="#8fdcfa" width={2.4} />
    <Areas list={lakes} fill="#8fdfff" amp={8} />
    <g fill="#8fdfff">
      {ponds.map(([x, y], i) => <polygon key={i} points={rough(`${x - 7},${y - 3} ${x + 3},${y - 8} ${x + 8},${y + 2} ${x},${y + 8}`, 3, i + 3)} />)}
    </g>
    <Ribbon list={highways} stroke="#f3d994" width={11} />
    <Ribbon list={highways} stroke="#fbecc9" width={6} />

    <g fontFamily="Roboto, sans-serif" fontSize="43" fontStyle="italic" fill="#5ba8cf">
      <text x="371" y="67" textLength="280">Lewisville Lake</text>
      <text x="1433" y="166" textLength="209">Lavon Lake</text>
    </g>
    <g fontFamily="Roboto, sans-serif" fontWeight="500" fontSize="61" fill="#000">
      <text x="157" y="1154" textLength="255">Arlington</text>
    </g>

    <g stroke="#5c5270" strokeOpacity=".45" strokeWidth="2" strokeLinejoin="round">
      {districts.map(([t, list]) => (
        <g key={t} transform={t}>
          {list.map(([c, p], i) => <polygon key={i} points={p} fill={band[c]} />)}
        </g>
      ))}
      <path d={seams} fill="none" strokeOpacity=".28" />
    </g>
    <clipPath id="county">
      <polygon points="450,472 1571,489 1560,1625 435,1616 441,870 472,868 475,800 473,565 450,560" />
    </clipPath>
    <g opacity=".2" clipPath="url(#county)">
      <Ribbon list={highways} stroke="#a0526e" width={8} />
    </g>
    <g fill="#5d63e8" opacity=".5">
      {["1205,1320 1225,1310 1215,1350 1250,1370 1245,1385 1210,1370", "1300,1365 1340,1355 1345,1370 1310,1380", "1320,1330 1345,1328 1330,1342", "1365,1360 1405,1350 1400,1370 1370,1380", "1515,620 1530,720 1545,790 1500,790", "970,1060 1040,1130 1045,1145 975,1080"].map((p, i) => (
        <polygon key={i} points={rough(p, 6, i + 40)} />
      ))}
    </g>
    <g fill="#c7e2ff">
      {["545,600 565,580 585,592 600,600 570,615 550,605", "625,490 655,480 655,530 635,515", "650,640 656,600 664,650 656,680", "645,790 660,785 680,800 670,815", "1515,880 1567,870 1567,955 1550,940"].map((p, i) => (
        <polygon key={i} points={rough(p, 5, i + 9)} />
      ))}
    </g>
    <g fontFamily="Roboto, sans-serif" fontWeight="500" fontSize="66">
      <text x="858" y="1050" textLength="210" fill="#221052">Dallas</text>
    </g>
    <g fontFamily="Roboto, sans-serif" fontSize="43" fontStyle="italic" fill="#4c93c6">
      <text x="1503" y="724" textLength="166">Lake Ray</text>
      <text x="1511" y="781" textLength="153">Hubbard</text>
    </g>
  </svg>
);

const rows: [string, string][] = [
  ["GEOID", "48113020800"],
  ["Composite Score", "2.38"],
  ["Total Population", "7,874"],
  ["Below Poverty", "2,760 (35.1%)"],
  ["Children Below Poverty", "1,121 (45.0%)"],
  ["Median Income", "$33,800"],
  ["Median Rent", "$1,094"],
  ["Hispanic Population", "2,494 (31.7%)"],
  ["White Population", "110 (1.4%)"],
  ["Black Population", "5,098\n(64.7%)"],
  ["Asian Population", "0 (0.0%)"],
  ["Renter-Occupied\nHouseholds", "1,451"],
  ["Eviction Filing Rate", "142.66"],
  ["Market Asking Rent to\nFair Market Rent\nDifference", "-$453"],
  ["Residential Property\nValue Change (2019-\n2023)", "128.7%"],
  ["New Residential Permits\n(2019-2023)", "186.5%"],
  ["Properties with Owner\nChanges (2019-2023)", "58.7%"],
];

export default function App() {
  return (
    <>
      <GlobalStyle />
      <Header>
        <Brand>
          <svg width="83.500" height="80" viewBox="6 0 83.500 80">
            <path d="M12 15H52.500Q54.500 15 56 16.200L78 36.200Q80.500 39 78 41.500L56 61.800Q54.500 63 52.500 63H12Q8 63 8 59V19Q8 15 12 15Z" fill="none" stroke="#fff" strokeWidth="2" />
            <text x="14.500" y="45" fill="#fff" fontFamily="Roboto, sans-serif" fontSize="18.500" fontWeight="500" textLength="49">CPAL</text>
          </svg>
          <Wordmark>CHILD POVERTY<br />ACTION LAB</Wordmark>
        </Brand>
        <AppName>Community Displacement Tool</AppName>
        <Nav>
          <NavLink $active>Tool</NavLink>
          <NavLink>About This Tool</NavLink>
        </Nav>
      </Header>
      <Page>
        <Sidebar>
          <Para>This tool assesses the risk of<br />displacement across five various<br />metrics of housing instability, below you<br />can select one of these scores to<br />visualize the map.</Para>
          <Para>Scores included in this tool should be<br />thought of in a directional manner.<br />Neighborhoods with higher<br />displacement scores have a relatively<br />higher risk of displacement than<br />neighborhoods with lower scores.</Para>
          <Label $mb={7}>Select a County</Label>
          <Radios $cols="142px 130px">
            <Option><Dot $on />Dallas County</Option>
            <Option><Dot />Tarrant County</Option>
          </Radios>
          <Label>Displacement Risk Score</Label>
          <Select>Overall Score</Select>
          <Para $mb={0}>Show me the census tracts with the<br />highest Overall Score in Dallas County.</Para>
          <Label>Top percentage of census tracts</Label>
          <Select>100%</Select>
          <Para>You can apply a second filter to the map,<br />filtering census tracts based on specific<br />demographic characteristic.</Para>
          <Label>Demographic Metric</Label>
          <Select>Child Poverty Rate</Select>
          <Para $mb={0}>Show me census tracts with a Child<br />Poverty Rate greater than or equal to 0%</Para>
          <Label $mb={7}>Percent Greater Than or Equal to</Label>
          <Radios $cols="65px 73px 74px 60px">
            {["0%", "20%", "40%", "60%", "80%"].map((t, i) => (
              <Option key={t}><Dot $on={i === 0} />{t}</Option>
            ))}
          </Radios>
        </Sidebar>

        <section>
          <Title>Discover Neighborhoods at Risk<br />of Displacement</Title>
          <Para $color="#2e3436">Zoom into the map and turn on the 'Neighborhoods' toggle on the top right of the map to see<br />the names of neighborhoods within the City of Dallas.</Para>
          <MapFrame>
            <BaseMap />
            <ZoomBox>
              <ZoomButton><svg width="14" height="14"><path d="M1 7H13M7 1V13" stroke="#000" strokeWidth="2" /></svg></ZoomButton>
              <ZoomButton><svg width="14" height="14"><path d="M1 7H13" stroke="#000" strokeWidth="2" /></svg></ZoomButton>
            </ZoomBox>
            <LayerBox><Check />Neighborhoods</LayerBox>
            <Credits><a>Leaflet</a> | © <a>Mapbox</a> Basemap © <a>Child Poverty Action Lab</a></Credits>
          </MapFrame>
        </section>

        <section>
          <Para $mb={0} $color="#2e3436">Click on a census tract in the map to see a<br />list of metrics associated with that<br />neighborhood.</Para>
          <Table>
            <HeadRow>
              <span>M<small>ETRIC</small></span>
              <svg width="11" height="18"><path d="M5.500 0L10.500 9L5.500 18L.500 9Z" fill="#284b51" /></svg>
            </HeadRow>
            {rows.map(([name, value], i) => (
              <Row key={name} $odd={i % 2 === 0}><MetricName>{name}</MetricName><MetricValue>{value}</MetricValue></Row>
            ))}
          </Table>
        </section>
      </Page>
    </>
  );
}
